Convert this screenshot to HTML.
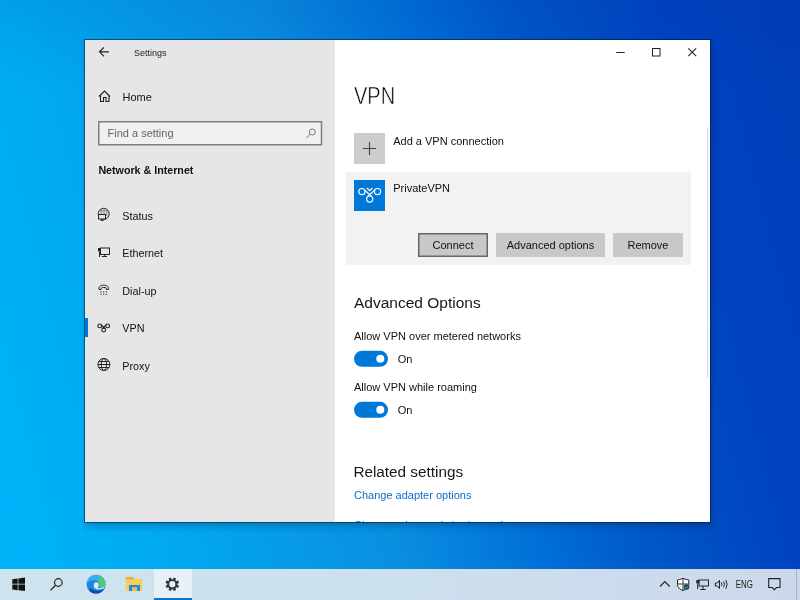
<!DOCTYPE html>
<html><head><meta charset="utf-8"><style>
html,body{margin:0;padding:0;width:800px;height:600px;overflow:hidden;background:#0a8ee0}
svg{display:block;will-change:transform}
text{font-family:"Liberation Sans", sans-serif;white-space:pre}
</style></head><body>
<svg width="800" height="600" viewBox="0 0 800 600">
<defs>
<linearGradient id="bgh" x1="0" y1="600" x2="894" y2="372" gradientUnits="userSpaceOnUse">
  <stop offset="0" stop-color="#00b4fa"/>
  <stop offset="0.1" stop-color="#00aff6"/>
  <stop offset="0.18" stop-color="#00aaf2"/>
  <stop offset="0.433" stop-color="#0a8ee0"/>
  <stop offset="0.58" stop-color="#0070d8"/>
  <stop offset="0.69" stop-color="#0058c8"/>
  <stop offset="0.85" stop-color="#0042c0"/>
  <stop offset="1" stop-color="#003eb8"/>
</linearGradient>
<linearGradient id="bgv" x1="0" y1="0" x2="0" y2="600" gradientUnits="userSpaceOnUse">
  <stop offset="0" stop-color="#0030a0" stop-opacity="0.10"/>
  <stop offset="0.15" stop-color="#0030a0" stop-opacity="0.0"/>
</linearGradient>
<linearGradient id="tb" x1="0" y1="0" x2="800" y2="0" gradientUnits="userSpaceOnUse">
  <stop offset="0" stop-color="#cde4ee"/>
  <stop offset="0.5" stop-color="#cde0ee"/>
  <stop offset="1" stop-color="#ccd8ea"/>
</linearGradient>
<clipPath id="edgeclip"><circle cx="96.05" cy="584.25" r="9.45"/></clipPath><clipPath id="cc"><rect x="335" y="40" width="375" height="482"/></clipPath>
<filter id="sh" x="-10%" y="-10%" width="120%" height="120%"><feGaussianBlur stdDeviation="3"/></filter>
</defs>
<rect x="0" y="0" width="800" height="600" fill="url(#bgh)"/>
<rect x="0" y="0" width="800" height="600" fill="url(#bgv)"/>
<rect x="86" y="44" width="627" height="483" fill="#001030" opacity="0.22" filter="url(#sh)"/>
<rect x="84" y="39" width="627" height="484" fill="#001020" opacity="0.5"/>
<rect x="85" y="40" width="250" height="482" fill="#e6e6e6"/>
<rect x="335" y="40" width="375" height="482" fill="#ffffff"/>
<path d="M99.5 51.8 H109 M104 47.3 L99.5 51.8 L104 56.3" stroke="#222" stroke-width="1.15" fill="none"/>
<text x="134" y="55.7" font-size="9" fill="#222" font-weight="normal" text-anchor="start" >Settings</text>
<path d="M99 96.5 L104.5 91 L110 96.5 M100.5 95 V101.5 H103.5 V97.5 H106 V101.5 H109 V95" stroke="#222" stroke-width="1.1" fill="none"/>
<text x="122.5" y="101" font-size="11" fill="#111111" font-weight="normal" text-anchor="start" >Home</text>
<rect x="98.75" y="121.75" width="222.75" height="23" fill="#f0f0f0" stroke="#7e7e7e" stroke-width="1.5"/>
<text x="107.5" y="136.7" font-size="11" fill="#666" font-weight="normal" text-anchor="start" >Find a setting</text>
<circle cx="312.3" cy="132" r="3" stroke="#777" stroke-width="1" fill="none"/><path d="M310.2 134.2 L306.5 137.9" stroke="#777" stroke-width="1"/>
<text x="98.4" y="173.5" font-size="10.7" fill="#111111" font-weight="bold" text-anchor="start" >Network &amp; Internet</text>
<text x="122.3" y="219.5" font-size="10.8" fill="#111111" font-weight="normal" text-anchor="start" >Status</text>
<text x="122.3" y="257" font-size="10.8" fill="#111111" font-weight="normal" text-anchor="start" >Ethernet</text>
<text x="122.3" y="295" font-size="10.8" fill="#111111" font-weight="normal" text-anchor="start" >Dial-up</text>
<text x="122.3" y="332" font-size="10.8" fill="#111111" font-weight="normal" text-anchor="start" >VPN</text>
<text x="122.3" y="369.5" font-size="10.8" fill="#111111" font-weight="normal" text-anchor="start" >Proxy</text>
<g stroke="#222" stroke-width="1" fill="none"><circle cx="103.7" cy="213.8" r="5.5"/><path d="M101.2 209 V214 M104 208.3 V214 M106.8 209 V216" stroke="#666" stroke-width="0.8"/><path d="M99.5 210.8 H108" stroke="#777" stroke-width="0.7"/></g>
<rect x="98.5" y="214.5" width="7" height="4.5" fill="#e6e6e6" stroke="#222" stroke-width="1"/><path d="M100.5 220.3 H103.5" stroke="#222" stroke-width="1.2"/>
<g stroke="#222" stroke-width="1" fill="none"><rect x="100.5" y="248" width="9" height="6.5"/><path d="M104.7 254.5 V256.3 M101.8 256.5 H107 M99.5 252 V257"/></g><rect x="98" y="248" width="3" height="3.5" fill="#222"/>
<path d="M99 289.5 C98.5 286 101 285.2 103.7 285.2 C106.5 285.2 109 286 108.5 289.5 L106.5 289.5 L106 287.8 C105 287.3 102.5 287.3 101.5 287.8 L101 289.5 Z" stroke="#222" stroke-width="1" fill="none"/>
<rect x="100.5" y="291.0" width="1" height="1.6" fill="#555"/>
<rect x="100.5" y="293.5" width="1" height="1.6" fill="#555"/>
<rect x="103.2" y="291.0" width="1" height="1.6" fill="#555"/>
<rect x="103.2" y="293.5" width="1" height="1.6" fill="#555"/>
<rect x="105.8" y="291.0" width="1" height="1.6" fill="#555"/>
<rect x="105.8" y="293.5" width="1" height="1.6" fill="#555"/>
<g stroke="#222" stroke-width="1.1" fill="none"><circle cx="99.7" cy="325.9" r="1.9"/><circle cx="107.7" cy="325.9" r="1.9"/><circle cx="103.7" cy="330.1" r="1.9"/><path d="M101.2 324.8 L105.4 328.6 M106.2 324.8 L102 328.6"/></g>
<g stroke="#222" stroke-width="1" fill="none"><circle cx="103.9" cy="364.5" r="6"/><ellipse cx="103.9" cy="364.5" rx="2.6" ry="6"/><path d="M97.9 364.5 H109.9 M98.8 361.5 H109 M98.8 367.5 H109"/></g>
<rect x="85" y="318" width="3" height="19" fill="#0078d7"/>
<path d="M616.3 52.5 H624.7" stroke="#222" stroke-width="1"/>
<rect x="652.5" y="48.5" width="7.5" height="7.5" stroke="#222" stroke-width="1" fill="none"/>
<path d="M688.3 48.3 L696.2 56.2 M696.2 48.3 L688.3 56.2" stroke="#222" stroke-width="1.05"/>
<text transform="translate(354,104) scale(0.87,1)" font-size="23" fill="#000" font-weight="normal" text-anchor="start" stroke="#fff" stroke-width="0.5">VPN</text>
<rect x="354" y="133" width="31" height="31" fill="#cccccc"/>
<path d="M363 148.5 H376 M369.5 142 V155" stroke="#444" stroke-width="1.1"/>
<text x="393.2" y="144.7" font-size="11" fill="#111111" font-weight="normal" text-anchor="start" >Add a VPN connection</text>
<rect x="346" y="172" width="345" height="93" fill="#f2f2f2"/>
<rect x="354" y="180" width="31" height="31" fill="#0078d7"/>
<g stroke="#fff" stroke-width="1.2" fill="none"><circle cx="361.9" cy="191.6" r="3.1"/><circle cx="377.5" cy="191.6" r="3.1"/><circle cx="369.7" cy="199.1" r="3.1"/><path d="M364.2 189.8 L372 196.6 M375.2 189.8 L367.4 196.6 M367 188 L369.7 190.6 L372.4 188"/></g>
<text x="393.2" y="191.5" font-size="11" fill="#111111" font-weight="normal" text-anchor="start" >PrivateVPN</text>
<rect x="418.75" y="233.75" width="68.5" height="22.5" fill="#c8c8c8" stroke="#666" stroke-width="1.5"/>
<text x="453" y="249.2" font-size="11" fill="#111111" font-weight="normal" text-anchor="middle" >Connect</text>
<rect x="496" y="233" width="109" height="24" fill="#c8c8c8"/>
<text x="550.5" y="249.2" font-size="11" fill="#111111" font-weight="normal" text-anchor="middle" >Advanced options</text>
<rect x="613" y="233" width="70" height="24" fill="#c8c8c8"/>
<text x="648" y="249.2" font-size="11" fill="#111111" font-weight="normal" text-anchor="middle" >Remove</text>
<text x="354" y="308.4" font-size="15.5" fill="#161616" font-weight="normal" text-anchor="start" >Advanced Options</text>
<text x="354" y="339.6" font-size="11" fill="#111111" font-weight="normal" text-anchor="start" >Allow VPN over metered networks</text>
<rect x="354" y="350.8" width="34" height="16" rx="8" fill="#0078d7"/>
<circle cx="380.3" cy="358.8" r="4" fill="#fff"/>
<text x="397.8" y="363" font-size="11" fill="#111111" font-weight="normal" text-anchor="start" >On</text>
<text x="354" y="390.6" font-size="11" fill="#111111" font-weight="normal" text-anchor="start" >Allow VPN while roaming</text>
<rect x="354" y="401.8" width="34" height="16" rx="8" fill="#0078d7"/>
<circle cx="380.3" cy="409.8" r="4" fill="#fff"/>
<text x="397.8" y="414" font-size="11" fill="#111111" font-weight="normal" text-anchor="start" >On</text>
<text x="353.4" y="476.6" font-size="15.3" fill="#161616" font-weight="normal" text-anchor="start" >Related settings</text>
<text x="354" y="498.6" font-size="11" fill="#0a6ccc" font-weight="normal" text-anchor="start" >Change adapter options</text>
<g clip-path="url(#cc)">
<text x="354" y="528.6" font-size="11" fill="#0a6ccc" font-weight="normal" text-anchor="start" >Change advanced sharing options</text>
</g>
<rect x="707" y="127" width="1" height="251" fill="#d9d9d9"/>
<rect x="0" y="569" width="800" height="31" fill="url(#tb)"/>
<path d="M12.3 579.2 L17.7 578.5 V583.8 H12.3 Z M18.4 578.4 L25 577.5 V583.8 H18.4 Z M12.3 584.5 H17.7 V590.2 L12.3 589.5 Z M18.4 584.5 H25 V591 L18.4 590.3 Z" fill="#111"/>
<circle cx="58.3" cy="582.5" r="3.8" stroke="#222" stroke-width="1.2" fill="none"/><path d="M55.6 585.3 L50.5 590.4" stroke="#222" stroke-width="1.3"/>
<g clip-path="url(#edgeclip)"><rect x="86" y="574" width="20" height="20" fill="#1a84e0"/><path d="M86 584 C87 578 91 574.5 96 574.5 C101 574.5 105 578 106 582 L99 582 C97 580 93 579.5 90 581 C88.5 582 87 583 86 584 Z" fill="#37b2ef"/><ellipse cx="102.2" cy="582.2" rx="3.8" ry="6" fill="#4ccb72"/><path d="M90 588 C92 590 96 591 100 590.5 C103 590 104.5 589 106 587 L106 594 L88 594 Z" fill="#0b4fae"/><ellipse cx="96.2" cy="585.4" rx="2.4" ry="3.2" fill="#d8ecf4"/><path d="M96 588.6 C98 589 101 588.8 104 587.6" stroke="#d8ecf4" stroke-width="1.2" fill="none"/></g>
<path d="M125.7 577 H133 L134.5 579 H142.2 V591 H125.7 Z" fill="#f6cf5a"/><path d="M125.7 577 H133 L134.5 579.5 H125.7 Z" fill="#e0b040"/>
<path d="M129 591 V585 H140 V591 H137 V587.5 H132 V591 Z" fill="#2a88dc"/><rect x="132" y="587.5" width="5" height="3.5" fill="#f0c040"/>
<rect x="154" y="569" width="38" height="31" fill="#e6f0f6"/>
<rect x="154" y="598" width="38" height="2" fill="#0078d7"/>
<path d="M179.07 585.52 L178.02 588.05 L176.38 587.26 L175.36 588.28 L176.15 589.92 L173.62 590.97 L173.03 589.25 L171.57 589.25 L170.98 590.97 L168.45 589.92 L169.24 588.28 L168.22 587.26 L166.58 588.05 L165.53 585.52 L167.25 584.93 L167.25 583.47 L165.53 582.88 L166.58 580.35 L168.22 581.14 L169.24 580.12 L168.45 578.48 L170.98 577.43 L171.57 579.15 L173.03 579.15 L173.62 577.43 L176.15 578.48 L175.36 580.12 L176.38 581.14 L178.02 580.35 L179.07 582.88 L177.35 583.47 L177.35 584.93 Z M175.4 584.2 A3.1 3.1 0 1 0 169.2 584.2 A3.1 3.1 0 1 0 175.4 584.2 Z" fill="#333" fill-rule="evenodd"/>
<path d="M660 586.5 L664.8 581.5 L669.7 586.5" stroke="#222" stroke-width="1.1" fill="none"/>
<path d="M677.5 580 C680 579.5 681.5 579 683 578.3 C684.5 579 686 579.5 688.8 580 V584.5 C688.8 587.5 686 589.5 683 590.5 C680 589.5 677.5 587.5 677.5 584.5 Z" fill="#fff" stroke="#222" stroke-width="1"/>
<path d="M683 578.5 V590 M677.5 584 H688.8" stroke="#222" stroke-width="0.9"/>
<circle cx="686.5" cy="587" r="2.8" fill="#1f3c66"/><path d="M685 587 L686.2 588.2 L688.2 585.8" stroke="#4cd080" stroke-width="0.9" fill="none"/>
<g stroke="#222" stroke-width="1" fill="none"><rect x="699" y="580" width="9.5" height="6"/><path d="M703 586 V589.3 M700.3 589.5 H705.8 M697.7 584 V589"/></g><rect x="696.3" y="580" width="3" height="3.5" fill="#222"/>
<path d="M715.3 583 H717.3 L719.5 580.3 V588.5 L717.3 586 H715.3 Z" stroke="#222" stroke-width="1" fill="none"/>
<path d="M721.3 582.5 Q722.5 584.3 721.3 586 M723.5 581.5 Q725.5 584.3 723.5 587.3 M725.8 580 Q728.5 584.3 725.8 588.8" stroke="#222" stroke-width="1" fill="none"/>
<text transform="translate(735.8,587.5) scale(0.72,1)" font-size="11" fill="#222" font-weight="normal" text-anchor="start" >ENG</text>
<path d="M768.7 578.6 H780 V587.5 H776.5 L774.3 589.7 L772.1 587.5 H768.7 Z" stroke="#222" stroke-width="1.1" fill="none"/>
<rect x="796" y="569" width="1" height="31" fill="#a9b3bf"/>
</svg>
</body></html>
